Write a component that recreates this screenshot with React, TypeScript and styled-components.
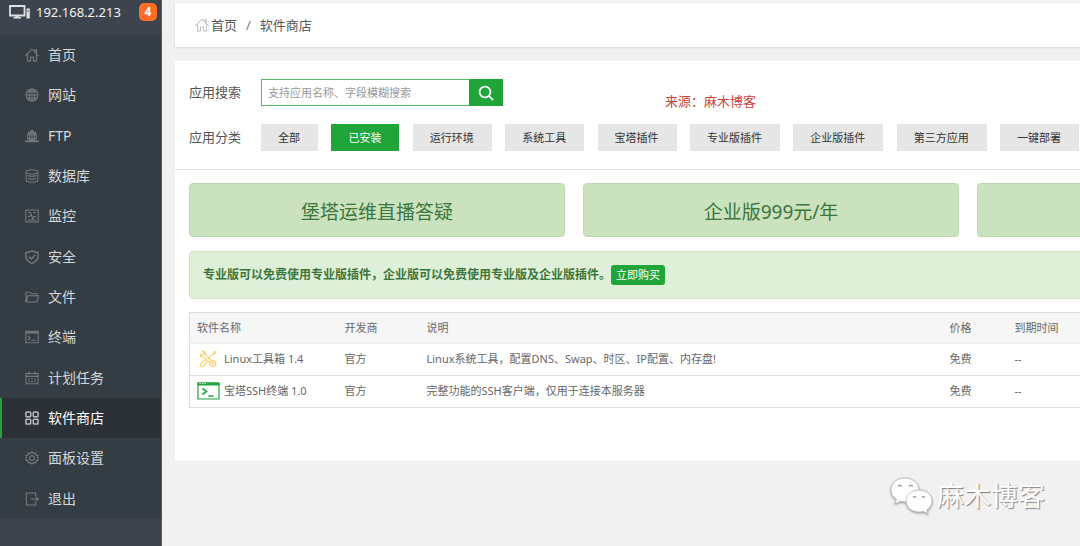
import React from "react";
import styled, { createGlobalStyle, css } from "styled-components";

const GlobalStyle = createGlobalStyle`
  *, *::before, *::after { box-sizing: border-box; }
  body {
    margin: 0;
    background: #f1f1f1;
    color: #555;
    font-family: "Noto Sans", "Noto Sans CJK SC", sans-serif;
    font-size: 13px;
    line-height: 20px;
    overflow-x: hidden;
  }
  button, input, table { font: inherit; }
  ul, ol, h2, p { margin: 0; padding: 0; font: inherit; }
  ul, ol { list-style: none; }
  a { color: inherit; text-decoration: none; }
`;

const Page = styled.div`
  position: relative;
  display: flex;
  min-height: 100vh;
  overflow: hidden;
`;

/* ---------- sidebar ---------- */

const Sidebar = styled.aside`
  flex: none;
  width: 162px;
  background: #3d444d;
  border-right: 1px solid #585e65;
`;

const ServerBar = styled.div`
  display: flex;
  align-items: center;
  height: 35px;
  padding: 0 4px 11px 9px;
  gap: 6px;
  color: #f2f3f4;
  svg { flex: none; }
`;

const Badge = styled.span`
  width: 18px;
  height: 18px;
  margin-left: auto;
  border-radius: 5px;
  background: #fc6d26;
  color: #fff;
  font-size: 12px;
  font-weight: 700;
  line-height: 18px;
  text-align: center;
`;

const Menu = styled.ul`
  display: grid;
  grid-auto-rows: 1fr;
  min-height: 484px;
  background: #353d44;
`;

const MenuLink = styled.a<{ $active?: boolean }>`
  display: flex;
  align-items: center;
  gap: 9px;
  height: 100%;
  padding-left: 23px;
  border-left: 2px solid transparent;
  color: #d5d7d9;
  font-size: 14px;
  svg { color: #747a80; flex: none; }
  ${(p) =>
    p.$active &&
    css`
      border-left-color: #20a53a;
      background: #2c3138;
      color: #fff;
      svg { color: #b9bcbf; }
    `}
`;

/* ---------- main column ---------- */

const Main = styled.main`
  flex: 1 0 1205px;
  min-width: 0;
  padding: 3px 0 0 13px;
`;

const Breadcrumb = styled.nav`
  height: 44px;
  margin-bottom: 14px;
  padding: 0 20px;
  background: #fff;
  box-shadow: 0 1px 2px rgba(0, 0, 0, 0.12);
  ol {
    display: flex;
    align-items: center;
    height: 100%;
  }
  li, a { display: flex; align-items: center; }
  a { gap: 2px; }
  li + li::before {
    content: "/";
    margin: 0 9px;
    color: #777;
  }
  svg { color: #c4c4c4; }
`;

const Panel = styled.section`
  position: relative;
  padding: 18px 14px 53px;
  background: #fff;
`;

const FilterRow = styled.div`
  display: flex;
  align-items: center;
  height: 27px;
  margin-bottom: 18px;
  white-space: nowrap;
`;

const FilterLabel = styled.label`
  width: 72px;
  padding-bottom: 1px;
`;

const SearchBox = styled.form`
  display: flex;
  height: 27px;
`;

const SearchInput = styled.input`
  width: 208px;
  padding: 0 6px;
  border: 1px solid #57b96a;
  border-right: 0;
  outline: 0;
  background: #fff;
  color: #555;
  font-size: 11px;
  &::placeholder { color: #999; opacity: 1; }
`;

const SearchButton = styled.button`
  display: grid;
  place-items: center;
  width: 34px;
  padding: 0;
  border: 0;
  background: #20a53a;
  color: #fff;
`;

const Chip = styled.button<{ $active?: boolean }>`
  height: 27px;
  margin-right: 10px;
  padding: 0 18px 0 17px;
  border: 0;
  background: ${(p) => (p.$active ? "#20a53a" : "#e6e6e6")};
  color: ${(p) => (p.$active ? "#fff" : "#333")};
  font-size: 11px;
  line-height: 27px;
  vertical-align: middle;
`;

const Divider = styled.hr`
  height: 1px;
  margin: 0 -14px 13px;
  border: 0;
  background: #e4e4e4;
`;

const CardGrid = styled.div`
  display: grid;
  grid-template-columns: repeat(3, 1fr);
  gap: 18px;
  margin-bottom: 14px;
`;

const Card = styled.a`
  height: 54px;
  border: 1px solid #bcd9b0;
  border-radius: 4px;
  background: #cbe2bf;
  color: #3c763d;
  font-size: 19px;
  line-height: 56px;
  text-align: center;
`;

const Notice = styled.div`
  display: flex;
  align-items: center;
  height: 48px;
  margin-bottom: 13px;
  padding: 0 13px;
  border: 1px solid #d0e6c3;
  border-radius: 4px;
  background: #dff0d8;
  color: #3c763d;
  font-size: 12px;
  font-weight: 700;
`;

const BuyButton = styled.button`
  height: 20px;
  padding: 0 5px;
  border: 0;
  border-radius: 3px;
  background: #20a53a;
  color: #fff;
  font-size: 11px;
  font-weight: 400;
  line-height: 20px;
`;

const SoftTable = styled.table`
  width: 100%;
  border: 1px solid #ddd;
  border-collapse: collapse;
  table-layout: fixed;
  color: #666;
  font-size: 11px;
  line-height: 16px;
  th, td {
    height: 32px;
    padding: 0 7px 1px;
    border-bottom: 1px solid #ddd;
    font-weight: 400;
    text-align: left;
    white-space: nowrap;
  }
  th { height: 31px; background: #f6f6f6; border-bottom-color: #eee; }
`;

const Col = styled.col<{ $width?: number }>`
  width: ${(p) => (p.$width ? p.$width + "px" : "auto")};
`;

const SoftName = styled.span`
  display: flex;
  align-items: center;
  gap: 4px;
`;

/* ---------- overlay marks ---------- */

const SourceMark = styled.p`
  position: absolute;
  top: 31px;
  left: 490px;
  color: #c8453c;
  font-family: "Liberation Serif", "Noto Sans CJK SC", serif;
`;

const BlogMark = styled.div`
  position: absolute;
  right: 35px;
  bottom: 30px;
  display: flex;
  align-items: center;
  gap: 4px;
  color: #fff;
  font-size: 27px;
  line-height: 40px;
  text-shadow: 1px 1px 1px #808080;
  svg { filter: drop-shadow(0 1px 1px #999); }
`;

/* ---------- icons ---------- */

const MENU_ICONS: Record<string, React.ReactNode> = {
  home: <path d="M.6 7.600 7 1.200l6.400 6.400M10 3.800V1.800h1.400v3.600M2.500 6.600v6.300h3V9h3v3.900h3V6.600" />,
  globe: (
    <>
      <circle cx="7" cy="7" r="6" />
      <ellipse cx="7" cy="7" rx="2.8" ry="6" />
      <path d="M1 7h12M7 1v12M2 3.8h10M2 10.2h10" />
    </>
  ),
  ftp: (
    <>
      <path d="M2.6 9.6a4.8 4.8 0 1 1 8.8 0zM7 1v8.6M2.4 5.6h9.2M4.9 9.6c-.8-3-.5-6.200 2.100-8.500 2.600 2.300 2.900 5.500 2.100 8.500M3 3.400h8" />
      <path d="M0 12.400h14M3.500 11h7" strokeWidth="1.600" />
    </>
  ),
  database: (
    <>
      <ellipse cx="7" cy="3" rx="5.800" ry="2.200" />
      <path d="M1.200 3v8c0 1.200 2.600 2.200 5.800 2.200s5.800-1 5.800-2.200V3M3 6.500c2 .8 6 .8 8 0M3 9.500c2 .8 6 .8 8 0" />
    </>
  ),
  monitor: (
    <>
      <path d="M.8 1h12.400v12H.8z" />
      <path d="M3 7.500h2L6.200 5l1.600 5L9 7.500h2M3 3.500h3M8 3.500h3M3 11h8" />
    </>
  ),
  shield: (
    <path d="M7 .8c2 1.200 4 1.500 6 1.600v4.200c0 3.200-2.600 5.400-6 6.800-3.400-1.400-6-3.600-6-6.800V2.400c2-.1 4-.4 6-1.600zM4 6.600l2.300 2.300L10.200 5" strokeWidth="1.400" />
  ),
  folder: <path d="M1 12V2.200h4l1.200 1.600h5.600v2M1 12l2-6.200h10.400L12 12z" />,
  terminal: (
    <>
      <path d="M.8 1.200h12.400v11.600H.8z" />
      <path d="M.8 2.500h12.400" strokeWidth="2" />
      <path d="m3 6 2.200 2L3 10M6.500 10.200H11" />
    </>
  ),
  calendar: (
    <>
      <path d="M1 2.500h12v10.300H1zM1 5.400h12M4 .8v2.800M10 .8v2.800" />
      <path d="M3.400 8h7.600M3.400 10.400h7.600" strokeDasharray="1.600 1.200" />
    </>
  ),
  apps: (
    <g strokeWidth="1.500">
      <rect x=".9" y=".9" width="4.800" height="4.800" rx=".8" />
      <rect x="8.300" y=".9" width="4.800" height="4.800" rx=".8" />
      <rect x=".9" y="8.300" width="4.800" height="4.800" rx=".8" />
      <rect x="8.300" y="8.300" width="4.800" height="4.800" rx=".8" />
    </g>
  ),
  gear: (
    <>
      <path d="m7 .8 1.500 1.500 2.100-.3.400 2.100 2.100.6L12.300 7l.8 2.300-2.100.6-.4 2.100-2.100-.3L7 13.200l-1.500-1.500-2.100.3L3 9.900.9 9.300 1.700 7 .9 4.700 3 4.100l.4-2.100 2.100.3z" />
      <circle cx="7" cy="7" r="2.300" />
    </>
  ),
  exit: <path d="M10.600 4.200V1H1.400v12h9.200V9.800M5.400 7h7.800M11 4.900 13.200 7 11 9.100" />,
};

const LineIcon = ({ name }: { name: string }) => (
  <svg width="14" height="14" viewBox="0 0 14 14" fill="none" stroke="currentColor" strokeWidth="1.100" aria-hidden="true">
    {MENU_ICONS[name]}
  </svg>
);

const ServerIcon = () => (
  <svg width="21" height="14" viewBox="0 0 21 14" aria-hidden="true">
    <path d="M1 1h14.500v9.500H1z" fill="none" stroke="#dfe1e3" strokeWidth="1.800" />
    <path d="M6.500 10.500h3V12H12v1.600H4.500V12h2zM17.500 3.500h3.300v10.100h-3.300z" fill="#dfe1e3" />
    <path d="M18.300 6h1.600" stroke="#3d444d" />
  </svg>
);

const SearchIcon = () => (
  <svg width="16" height="16" viewBox="0 0 16 16" fill="none" stroke="currentColor" strokeWidth="1.700" strokeLinecap="round" aria-hidden="true">
    <circle cx="7" cy="7" r="5.400" />
    <path d="m11 11 3.600 3.600" />
  </svg>
);

const ToolboxIcon = () => (
  <svg width="23" height="18" viewBox="0 0 23 18" fill="none" stroke="#fbd06a" strokeWidth="1.100" strokeLinecap="round" strokeLinejoin="round" aria-hidden="true">
    <path d="M5.200 1.200 7.200 3 6.600 4.900 4.700 5.500 3.200 3.900c-.3 2.300 1.400 3.700 3.500 3.200l6.100 5.500M5.200 1.200c2.200-.2 3.700 1.400 3.200 3.500l5.900 5.600" />
    <circle cx="15.800" cy="13.600" r="3" />
    <circle cx="15.800" cy="13.600" r=".9" />
    <path d="m19 1.400-2.300.9-.8 1.800-5 4.800M19 1.400l-.9 2.300-1.800.8" />
    <path d="M8.500 10 4.200 13.200c-1.200 1-1.200 2.300-.4 3.100.9.800 2.200.7 3.100-.4l3.300-4.300" />
  </svg>
);

const SshIcon = () => (
  <svg width="23" height="18" viewBox="0 0 23 18" fill="none" stroke="#20a53a" aria-hidden="true">
    <path d="M1 1h21v16H1z" strokeWidth="1.200" />
    <path d="M.4 2h22.200" strokeWidth="3" />
    <path d="M2.500 1.500h1.200M5 1.500h1.200M7.500 1.500h1.200" stroke="#fff" strokeWidth="1" />
    <path d="m5.500 6.500 4 3-4 3M11.500 14h5" strokeWidth="1.600" />
  </svg>
);

const WechatIcon = () => (
  <svg width="43" height="38" viewBox="0 0 43 38" aria-hidden="true">
    <g fill="#fff" stroke="#b4b4b4" strokeWidth=".8">
      <path d="M15 1C7 1 1 6.400 1 13c0 4 2 7.200 5.400 9.400L5 27l5.300-2.700c1.500.4 3 .6 4.700.6 8 0 14-5.300 14-11.900S23 1 15 1z" />
      <path d="M29 13c-7.300 0-13 4.800-13 10.900S21.700 35 29 35c1.500 0 3-.2 4.300-.6L38 37l-1.200-4c3.200-2 5.200-5.300 5.200-9.100C42 17.800 36.300 13 29 13z" />
    </g>
    <g fill="none" stroke="#999" strokeWidth="1.300">
      <path d="M8 9.500a2 2 0 0 1 3.600 0M19 9.500a2 2 0 0 1 3.600 0M23 20.500a1.700 1.700 0 0 1 3 0M32 20.500a1.700 1.700 0 0 1 3 0" />
    </g>
  </svg>
);

/* ---------- data ---------- */

const MENU = [
  ["home", "首页"],
  ["globe", "网站"],
  ["ftp", "FTP"],
  ["database", "数据库"],
  ["monitor", "监控"],
  ["shield", "安全"],
  ["folder", "文件"],
  ["terminal", "终端"],
  ["calendar", "计划任务"],
  ["apps", "软件商店"],
  ["gear", "面板设置"],
  ["exit", "退出"],
];

const CATEGORIES = ["全部", "已安装", "运行环境", "系统工具", "宝塔插件", "专业版插件", "企业版插件", "第三方应用", "一键部署"];

const SOFTWARE = [
  { icon: <ToolboxIcon />, name: "Linux工具箱 1.4", info: "Linux系统工具，配置DNS、Swap、时区、IP配置、内存盘!" },
  { icon: <SshIcon />, name: "宝塔SSH终端 1.0", info: "完整功能的SSH客户端，仅用于连接本服务器" },
];

export default function App() {
  return (
    <>
      <GlobalStyle />
      <Page>
        <Sidebar>
          <ServerBar>
            <ServerIcon />
            <span>192.168.2.213</span>
            <Badge>4</Badge>
          </ServerBar>
          <Menu>
            {MENU.map(([icon, label]) => (
              <li key={icon}>
                <MenuLink href="#" $active={icon === "apps"}>
                  <LineIcon name={icon} />
                  {label}
                </MenuLink>
              </li>
            ))}
          </Menu>
        </Sidebar>
        <Main>
          <Breadcrumb>
            <ol>
              <li>
                <a href="#">
                  <LineIcon name="home" />
                  首页
                </a>
              </li>
              <li>软件商店</li>
            </ol>
          </Breadcrumb>
          <Panel>
            <FilterRow>
              <FilterLabel htmlFor="app-search">应用搜索</FilterLabel>
              <SearchBox>
                <SearchInput id="app-search" type="text" placeholder="支持应用名称、字段模糊搜索" />
                <SearchButton type="button" aria-label="搜索">
                  <SearchIcon />
                </SearchButton>
              </SearchBox>
            </FilterRow>
            <FilterRow>
              <FilterLabel as="span">应用分类</FilterLabel>
              <div>
                {CATEGORIES.map((name) => (
                  <React.Fragment key={name}>
                    <Chip type="button" $active={name === "已安装"}>{name}</Chip>{" "}
                  </React.Fragment>
                ))}
              </div>
            </FilterRow>
            <Divider />
            <CardGrid>
              <Card href="#">堡塔运维直播答疑</Card>
              <Card href="#">企业版999元/年</Card>
              <Card href="#" />
            </CardGrid>
            <Notice>
              <span>专业版可以免费使用专业版插件，企业版可以免费使用专业版及企业版插件。</span>
              <BuyButton type="button">立即购买</BuyButton>
            </Notice>
            <SoftTable>
              <colgroup>
                <Col $width={148} />
                <Col $width={82} />
                <Col $width={523} />
                <Col $width={65} />
                <Col />
              </colgroup>
              <thead>
                <tr>
                  <th>软件名称</th>
                  <th>开发商</th>
                  <th>说明</th>
                  <th>价格</th>
                  <th>到期时间</th>
                </tr>
              </thead>
              <tbody>
                {SOFTWARE.map((item) => (
                  <tr key={item.name}>
                    <td>
                      <SoftName>
                        {item.icon}
                        {item.name}
                      </SoftName>
                    </td>
                    <td>官方</td>
                    <td>{item.info}</td>
                    <td>免费</td>
                    <td>--</td>
                  </tr>
                ))}
              </tbody>
            </SoftTable>
            <SourceMark>来源：麻木博客</SourceMark>
          </Panel>
        </Main>
        <BlogMark>
          <WechatIcon />
          麻木博客
        </BlogMark>
      </Page>
    </>
  );
}
